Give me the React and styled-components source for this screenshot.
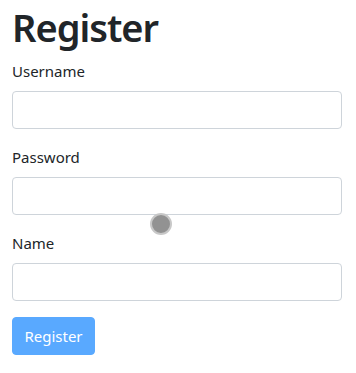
import React from "react";
import styled, { createGlobalStyle } from "styled-components";

const Global = createGlobalStyle`
  html, body { margin: 0; padding: 0; background: #fff; }
  body {
    font-family: "Noto Sans", "Open Sans", sans-serif;
    font-size: 16px;
    line-height: 1.5;
    color: #212529;
  }
  * { box-sizing: border-box; }
`;

const Container = styled.div`
  padding: 3px 14px 0 12px;
  position: relative;
`;

const Title = styled.h1`
  margin: 0 0 8px;
  font-size: 38px;
  font-weight: 600;
  line-height: 48px;
  letter-spacing: -1px;
`;

const Group = styled.div`
  margin-bottom: 16px;
  display: flex;
  flex-direction: column;
`;

const Label = styled.label`
  display: block;
  margin-bottom: 8px;
  line-height: 24px;
  font-size: 15px;
`;

const Input = styled.input`
  display: block;
  width: 100%;
  height: 38px;
  padding: 6px 12px;
  font: inherit;
  border: 1px solid #ced4da;
  border-radius: 4px;
  background: #fff;
  outline: none;
`;

const Button = styled.button`
  display: inline-block;
  height: 38px;
  width: 83px;
  padding: 0;
  font-family: inherit;
  font-size: 15px;
  color: #fff;
  background: #59a9ff;
  border: 1px solid #59a9ff;
  border-radius: 4px;
`;

const Cursor = styled.div`
  position: absolute;
  left: 150px;
  top: 213px;
  width: 22px;
  height: 22px;
  border-radius: 50%;
  background: #929292;
  border: 2px solid #c8c8c8;
`;

export default function App() {
  return (
    <>
      <Global />
      <Container>
        <Title>Register</Title>
        <Group>
          <Label>Username</Label>
          <Input type="text" />
        </Group>
        <Group>
          <Label>Password</Label>
          <Input type="password" />
        </Group>
        <Group>
          <Label>Name</Label>
          <Input type="text" />
        </Group>
        <Button type="submit">Register</Button>
        <Cursor />
      </Container>
    </>
  );
}
